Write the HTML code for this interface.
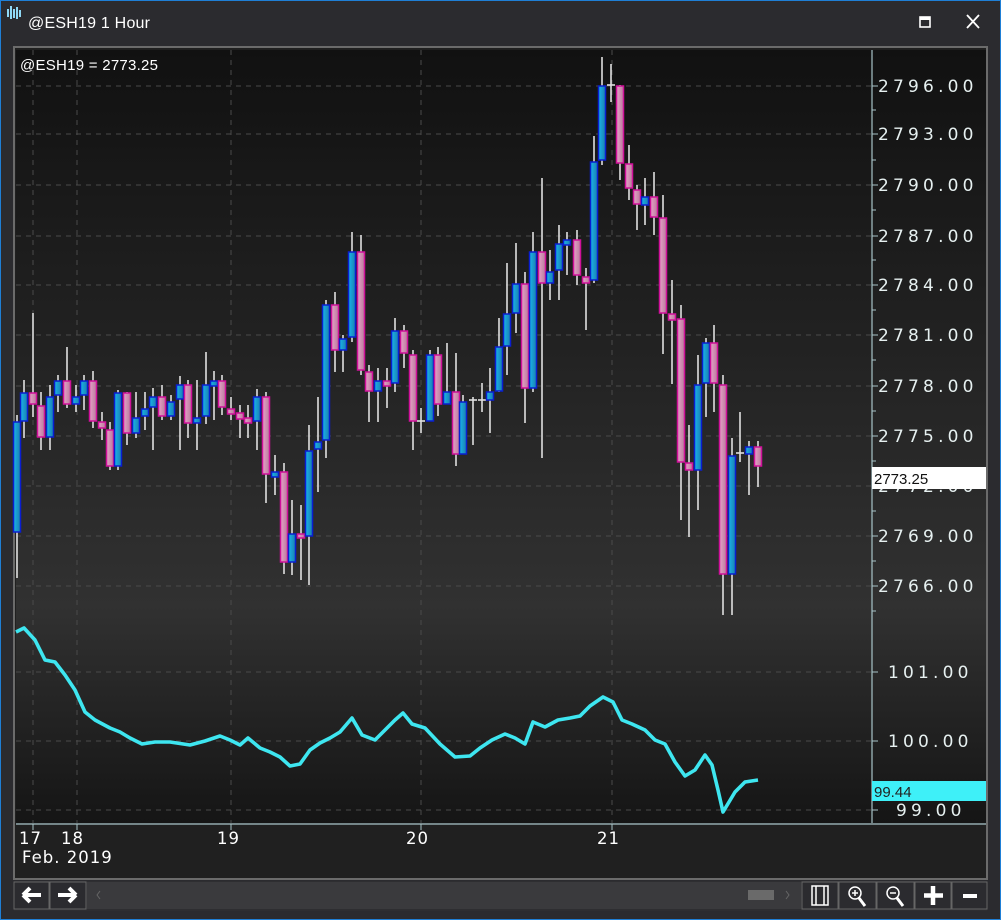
<!DOCTYPE html>
<html><head><meta charset="utf-8"><style>
html,body{margin:0;padding:0;background:#2b2b2f;width:1001px;height:920px;overflow:hidden;font-family:"Liberation Sans",sans-serif}
#win{position:absolute;left:0;top:0;width:999px;height:918px;border:1px solid #1f7fd6;background:#2b2b2f}
</style></head><body>
<div id="win"></div>
<svg id="s" width="1001" height="920" style="position:absolute;left:0;top:0" xmlns="http://www.w3.org/2000/svg">
<defs>
<linearGradient id="bg" x1="0" y1="0" x2="0" y2="1">
<stop offset="0" stop-color="#111"/><stop offset="0.72" stop-color="#313131"/><stop offset="1" stop-color="#151515"/>
</linearGradient>
<linearGradient id="gb" x1="0" y1="0" x2="1" y2="0"><stop offset="0" stop-color="#1ab4ea"/><stop offset="1" stop-color="#1a7fb0"/></linearGradient>
<linearGradient id="gp" x1="0" y1="0" x2="1" y2="0"><stop offset="0" stop-color="#e8a0c8"/><stop offset="1" stop-color="#b87c9c"/></linearGradient>
</defs>
<g>
<path d="M8 9 v8 M11 6 v13 M14 9 v9 M17 7 v12 M20 10 v7" stroke="#8fd8f5" stroke-width="2"/>
<text x="28" y="28" fill="#fff" font-size="16" textLength="122">@ESH19 1 Hour</text>
<rect x="920" y="17" width="10" height="10" fill="none" stroke="#fff" stroke-width="1.6"/><rect x="920" y="17" width="10" height="3" fill="#fff"/>
<path d="M967 15 L979 28 M979 15 L967 28" stroke="#fff" stroke-width="1.8"/>
</g>
<rect x="14" y="47" width="973" height="832" fill="#202020" stroke="#6b6b6b" stroke-width="2"/>
<rect x="16" y="50" width="970" height="773" fill="url(#bg)"/>
<g id="grid" stroke="#4a4a4a" stroke-dasharray="5,5" stroke-width="1"></g>
<line x1="872" y1="50" x2="872" y2="823" stroke="#a8c4c8" stroke-width="1.2"/>
<line x1="16" y1="824" x2="986" y2="824" stroke="#a8c4c8" stroke-width="1.2"/>
<g id="axis" fill="#e6f0f0" font-family="DejaVu Sans,sans-serif" font-size="17" letter-spacing="4.2"></g>
<g id="bars"></g>
<polyline fill="none" stroke="#3ee6f0" stroke-width="3.6" stroke-linejoin="round" points="16,632 24,628 35,640 45,660 55,662 65,675 75,690 85,712 95,720 110,728 120,732 130,738 142,744 155,742 170,742 190,745 205,741 220,736 230,740 240,745 248,738 260,748 270,752 280,757 290,766 300,764 310,750 320,743 330,738 340,732 352,718 362,735 375,740 385,730 395,720 403,713 412,724 425,728 440,744 455,757 470,756 480,748 492,740 505,734 515,738 525,744 533,722 545,727 558,720 570,718 580,716 590,706 603,697 613,702 622,720 632,724 645,730 655,740 665,744 675,762 685,776 695,770 705,755 712,765 718,790 723,812 735,792 745,782 758,780"/>
<text x="20" y="70" fill="#fff" font-size="15" textLength="138">@ESH19 = 2773.25</text>
<rect x="872" y="467" width="114" height="22" fill="#fff"/>
<text x="874" y="484" fill="#111" font-size="15">2773.25</text>
<rect x="872" y="781" width="114" height="20" fill="#3ef0f8"/>
<text x="874" y="797" fill="#222" font-size="15">99.44</text>
<g fill="#fff" font-family="DejaVu Sans,sans-serif" font-size="16.5" letter-spacing="1">
<text x="19" y="844">17</text><text x="61" y="844">18</text><text x="217" y="844">19</text><text x="406" y="844">20</text><text x="597" y="844">21</text>
<text x="22" y="863">Feb. 2019</text>
</g>
<g stroke="#a8c4c8"><line x1="33" y1="824" x2="33" y2="830"/><line x1="77" y1="824" x2="77" y2="830"/><line x1="231" y1="824" x2="231" y2="830"/><line x1="421" y1="824" x2="421" y2="830"/><line x1="612" y1="824" x2="612" y2="830"/></g>
<rect x="14" y="881" width="973" height="30" fill="#2e2e31"/>
<rect x="14" y="882" width="35" height="27" fill="#2b2b2f" stroke="#666"/>
<rect x="50" y="882" width="36" height="27" fill="#2b2b2f" stroke="#666"/>
<path d="M23 895 h18 M23 895 l7 -7 M23 895 l7 7" stroke="#fff" stroke-width="4" fill="none"/>
<path d="M76 895 h-18 M76 895 l-7 -7 M76 895 l-7 7" stroke="#fff" stroke-width="4" fill="none"/>
<rect x="87" y="882" width="714" height="27" fill="#3a3a3d"/>
<path d="M100 891 l-3 4 l3 4" stroke="#666" fill="none"/>
<rect x="748" y="890" width="26" height="10" fill="#6a6a6a"/>
<path d="M786 891 l3 4 l-3 4" stroke="#666" fill="none"/>
<g fill="#2b2b2f" stroke="#666">
<rect x="802" y="882" width="36" height="27"/><rect x="839" y="882" width="37" height="27"/><rect x="877" y="882" width="37" height="27"/><rect x="915" y="882" width="36" height="27"/><rect x="952" y="882" width="35" height="27"/>
</g>
<g stroke="#fff" fill="none" stroke-width="1.5">
<rect x="812" y="886" width="16" height="19"/><line x1="816" y1="886" x2="816" y2="905"/><line x1="824" y1="886" x2="824" y2="905"/>
<circle cx="855" cy="893" r="6"/><line x1="859" y1="898" x2="865" y2="906" stroke-width="3"/><path d="M852 893h6M855 890v6"/>
<circle cx="893" cy="893" r="6"/><line x1="897" y1="898" x2="903" y2="906" stroke-width="3"/><path d="M890 893h6"/>
</g>
<path d="M933 886 v19 M924 895.5 h19" stroke="#fff" stroke-width="4.5"/>
<path d="M963 896 h14" stroke="#fff" stroke-width="4"/>
</svg>
<script>
var NS="http://www.w3.org/2000/svg";
function el(p,t,a){var e=document.createElementNS(NS,t);for(var k in a)e.setAttribute(k,a[k]);p.appendChild(e);return e;}
var g=document.getElementById('grid');
[86,134,185,236,285,335,386,436,486,536,586,672,741,810].forEach(function(y){el(g,'line',{x1:16,y1:y,x2:872,y2:y});});
[33,77,231,421,612].forEach(function(x){el(g,'line',{x1:x,y1:50,x2:x,y2:823});});
var ax=document.getElementById('axis');
var labs=[[86,"2796.00"],[134,"2793.00"],[185,"2790.00"],[236,"2787.00"],[285,"2784.00"],[335,"2781.00"],[386,"2778.00"],[436,"2775.00"],[486,"2772.00"],[536,"2769.00"],[586,"2766.00"],[672,"101.00"],[741,"100.00"],[810,"99.00"]];
labs.forEach(function(l){var y=l[0];el(ax,'line',{x1:872,y1:y,x2:878,y2:y,stroke:'#a8c4c8'});var t=el(ax,'text',{x:(l[1].length>6?878:(l[1].length>5?888:896)),y:y+6});t.textContent=l[1];});
[110,160,210,260,310,360,411,461,511,561,611].forEach(function(y){el(ax,'line',{x1:872,y1:y,x2:876,y2:y,stroke:'#a8c4c8'});});
var B=[[17,422,532,'b',415,578],[24,393,421,'b',380,438],[33,393,404,'p',313,417],[41,406,437,'p',392,450],[50,397,437,'b',385,450],[58,381,395,'b',375,412],[67,381,404,'p',347,408],[76,397,404,'b',385,412],[84,381,395,'b',375,410],[93,381,421,'p',371,428],[102,422,428,'p',412,440],[110,430,466,'p',422,470],[118,393,466,'b',390,470],[127,393,433,'p',392,445],[136,418,433,'b',392,438],[145,409,416,'b',392,430],[153,397,407,'b',388,450],[162,397,416,'p',385,420],[171,402,416,'b',395,420],[180,385,399,'b',376,450],[188,385,423,'p',380,438],[197,418,423,'b',380,450],[206,385,416,'b',352,424],[214,381,386,'b',371,420],[222,381,407,'p',375,415],[231,409,414,'p',397,420],[240,413,419,'p',405,438],[248,418,423,'p',405,438],[257,397,421,'b',389,450],[266,397,474,'p',392,503],[275,472,477,'b',455,495],[284,472,562,'p',463,574],[292,534,562,'b',500,575],[301,534,538,'p',505,580],[309,451,536,'b',425,585],[318,442,449,'b',397,492],[326,305,440,'b',300,458],[335,305,350,'p',292,372],[343,339,350,'b',335,372],[352,252,337,'b',232,342],[361,252,370,'p',235,375],[369,372,391,'p',365,422],[378,381,391,'b',368,422],[387,381,386,'p',368,408],[395,331,383,'b',318,392],[404,331,353,'p',325,368],[413,355,421,'p',350,450],[421,421,421,'d',408,433],[430,355,421,'b',350,421],[438,355,404,'p',347,416],[447,392,404,'b',343,404],[456,392,454,'p',353,466],[463,402,454,'b',395,454],[473,400,400,'d',397,445],[482,400,400,'d',383,412],[490,392,400,'b',368,433],[499,347,391,'b',318,392],[507,314,346,'b',263,375],[516,284,313,'b',243,333],[525,284,388,'p',272,423],[533,252,388,'b',232,392],[542,252,283,'p',178,458],[550,272,283,'b',250,300],[559,244,270,'b',225,300],[567,240,245,'b',232,275],[577,240,275,'p',230,285],[586,277,283,'p',268,330],[594,162,280,'b',136,283],[602,86,160,'b',57,165],[611,85,85,'d',64,102],[620,86,163,'p',85,180],[629,164,188,'p',145,200],[637,190,204,'p',185,230],[645,197,205,'b',178,225],[654,197,217,'p',172,235],[663,218,313,'p',195,354],[672,314,320,'p',280,384],[681,319,462,'p',305,520],[689,463,470,'p',425,537],[698,385,470,'b',355,510],[706,343,383,'b',338,417],[714,343,383,'p',325,412],[723,385,574,'p',375,615],[732,456,574,'b',438,615],[740,453,453,'d',412,462],[749,447,454,'b',441,495],[758,447,466,'p',441,487]];
var bg=document.getElementById('bars');
B.forEach(function(b){var x=b[0];
el(bg,'line',{x1:x,y1:b[4],x2:x,y2:b[5],stroke:'#e0e0e0','stroke-width':1.6});
if(b[3]=='d'){el(bg,'line',{x1:x-4,y1:b[1],x2:x+4,y2:b[1],stroke:'#e0e0e0','stroke-width':1.6});return;}
var h=Math.max(b[2]-b[1],4);
el(bg,'rect',{x:x-3.5,y:b[1],width:7,height:h,fill:b[3]=='b'?'url(#gb)':'url(#gp)',stroke:b[3]=='b'?'#0a1ed0':'#d0109a','stroke-width':1.5});
});
</script>
</body></html>
